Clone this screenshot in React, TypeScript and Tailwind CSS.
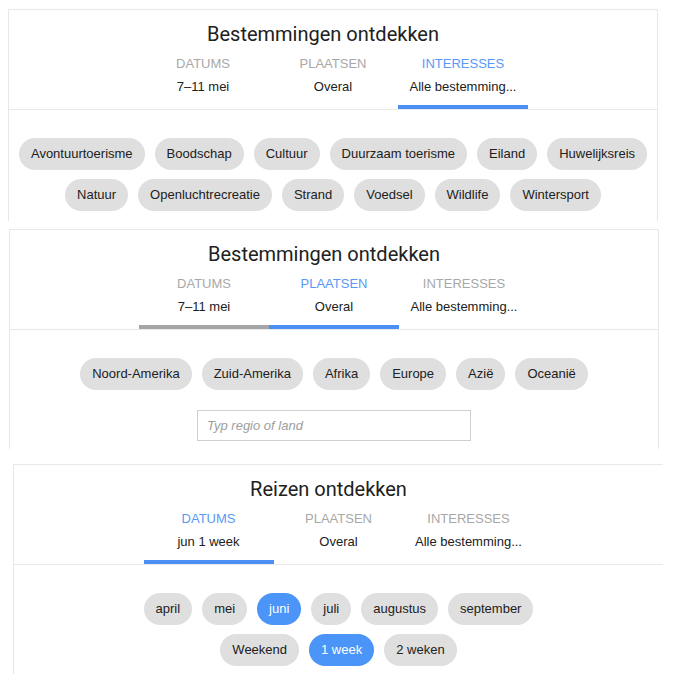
import React from "react";

type Tab = { label: string; value: string; bar?: "blue" | "gray" | null; active?: boolean };

const Header = ({ title, tabs }: { title: string; tabs: Tab[] }) => (
  <div className="border-b border-[#e8e8e8] pt-[10px]">
    <h1 className="h-[28px] pr-[20px] text-center font-['Roboto',sans-serif] text-[20px] leading-[28px] text-[#212121]">
      {title}
    </h1>
    <div className="flex justify-center">
      {tabs.map(tab => (
        <div key={tab.label} className="flex w-[130px] flex-col items-center pt-[6px]">
          <span
            className={
              tab.active
                ? "text-[13px] leading-[20px] text-[#5a98f7]"
                : "text-[13px] leading-[20px] text-[#a8a8a8]"
            }
          >
            {tab.label}
          </span>
          <span className="mt-[3px] text-[13px] leading-[20px] text-[#212121]">{tab.value}</span>
          <div
            className={
              tab.bar === "blue"
                ? "mt-[8px] h-[4px] w-full bg-[#4b8ff5]"
                : tab.bar === "gray"
                ? "mt-[8px] h-[4px] w-full bg-[#a6a6a6]"
                : "mt-[8px] h-[4px] w-full"
            }
          />
        </div>
      ))}
    </div>
  </div>
);

const Chip = ({ text, active }: { text: string; active?: boolean }) => (
  <span
    className={
      active
        ? "flex h-[32px] items-center rounded-full bg-[#4b94f8] px-3 text-[13px] text-white"
        : "flex h-[32px] items-center rounded-full bg-[#dfdfdf] px-3 text-[13px] text-[#212121]"
    }
  >
    {text}
  </span>
);

const interests = [
  "Avontuurtoerisme",
  "Boodschap",
  "Cultuur",
  "Duurzaam toerisme",
  "Eiland",
  "Huwelijksreis",
  "Natuur",
  "Openluchtrecreatie",
  "Strand",
  "Voedsel",
  "Wildlife",
  "Wintersport"
];

const regions = ["Noord-Amerika", "Zuid-Amerika", "Afrika", "Europe", "Azië", "Oceanië"];

const months = ["april", "mei", "juni", "juli", "augustus", "september"];
const lengths = ["Weekend", "1 week", "2 weken"];

export default function App() {
  return (
    <div className="h-[674px] w-[673px] overflow-hidden bg-white font-['Liberation_Sans','Arial',sans-serif]">
      {/* interesses */}
      <div className="ml-[8px] mt-[9px] w-[650px] border-x border-t border-[#e8e8e8]">
        <Header
          title="Bestemmingen ontdekken"
          tabs={[
            { label: "DATUMS", value: "7–11 mei" },
            { label: "PLAATSEN", value: "Overal" },
            { label: "INTERESSES", value: "Alle bestemming...", bar: "blue", active: true }
          ]}
        />
        <div className="flex flex-wrap justify-center gap-x-[10px] gap-y-[9px] px-[8px] pb-[10px] pt-[28px]">
          {interests.map(item => (
            <Chip key={item} text={item} />
          ))}
        </div>
      </div>

      {/* plaatsen */}
      <div className="ml-[9px] mt-[8px] w-[650px] border-x border-t border-[#e8e8e8]">
        <Header
          title="Bestemmingen ontdekken"
          tabs={[
            { label: "DATUMS", value: "7–11 mei", bar: "gray" },
            { label: "PLAATSEN", value: "Overal", bar: "blue", active: true },
            { label: "INTERESSES", value: "Alle bestemming..." }
          ]}
        />
        <div className="flex flex-col items-center pb-[8px] pt-[28px]">
          <div className="flex flex-wrap justify-center gap-x-[10px]">
            {regions.map(item => (
              <Chip key={item} text={item} />
            ))}
          </div>
          <input
            placeholder="Typ regio of land"
            className="mt-[20px] h-[31px] w-[274px] border border-[#cfcfcf] px-[9px] text-[13px] italic outline-none placeholder:text-[#9e9e9e]"
          />
        </div>
      </div>

      {/* datums */}
      <div className="ml-[13px] mt-[15px] w-[650px] border-l border-t border-[#e8e8e8]">
        <Header
          title="Reizen ontdekken"
          tabs={[
            { label: "DATUMS", value: "jun 1 week", bar: "blue", active: true },
            { label: "PLAATSEN", value: "Overal" },
            { label: "INTERESSES", value: "Alle bestemming..." }
          ]}
        />
        <div className="flex flex-col items-center gap-[9px] pb-[10px] pt-[28px]">
          <div className="flex justify-center gap-x-[10px]">
            {months.map(m => (
              <Chip key={m} text={m} active={m === "juni"} />
            ))}
          </div>
          <div className="flex justify-center gap-x-[10px]">
            {lengths.map(l => (
              <Chip key={l} text={l} active={l === "1 week"} />
            ))}
          </div>
        </div>
      </div>
    </div>
  );
}
